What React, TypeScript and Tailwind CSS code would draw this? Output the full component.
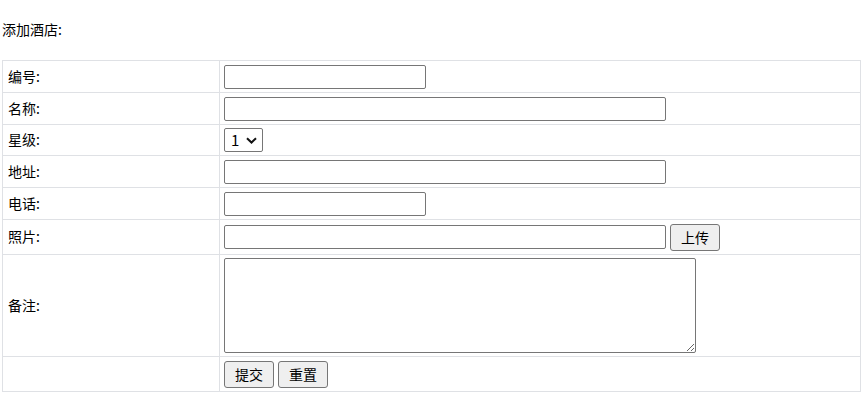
const rows = [
  { label: "编号:", h: "h-[32px]", kind: "short" },
  { label: "名称:", h: "h-[32px]", kind: "long" },
  { label: "星级:", h: "h-[31px]", kind: "select" },
  { label: "地址:", h: "h-[32px]", kind: "long" },
  { label: "电话:", h: "h-[32px]", kind: "short" },
  { label: "照片:", h: "h-[35px]", kind: "upload" },
  { label: "备注:", h: "h-[102px]", kind: "textarea" },
  { label: "", h: "h-[35px]", kind: "actions" },
];

const inputCls =
  "block h-[24px] border border-[#767676] rounded-[2px] bg-white px-[2px] text-[14px] outline-none";
const btnCls =
  "h-[27px] w-[50px] border border-[#767676] rounded-[3px] bg-[#efefef] text-[14px] text-black leading-none";

function Field({ kind }: { kind: string }) {
  if (kind === "short") return <input type="text" className={`${inputCls} w-[202px]`} />;
  if (kind === "long") return <input type="text" className={`${inputCls} w-[442px]`} />;
  if (kind === "select")
    return (
      <div className="relative w-[39px] h-[24px]">
        <select className="appearance-none w-[39px] h-[24px] border border-[#767676] rounded-[2px] bg-white pl-[6px] text-[15px] text-black outline-none">
          <option>1</option>
          <option>2</option>
          <option>3</option>
          <option>4</option>
          <option>5</option>
        </select>
        <svg
          className="pointer-events-none absolute left-[22px] top-[9px]"
          width="11"
          height="7"
          viewBox="0 0 11 7"
        >
          <path d="M1 1.2 L5.5 5.5 L10 1.2" fill="none" stroke="#111" strokeWidth="2" />
        </svg>
      </div>
    );
  if (kind === "upload")
    return (
      <div className="flex items-center gap-[4px]">
        <input type="text" className={`${inputCls} w-[442px]`} />
        <button className={btnCls}>上传</button>
      </div>
    );
  if (kind === "textarea")
    return (
      <textarea className="block w-[472px] h-[95px] border border-[#767676] rounded-[2px] bg-white p-[2px] text-[14px] outline-none" />
    );
  return (
    <div className="flex items-center gap-[4px]">
      <button className={btnCls}>提交</button>
      <button className={btnCls}>重置</button>
    </div>
  );
}

export default function App() {
  return (
    <div
      className="min-h-[419px] bg-white text-black text-[14px]"
      style={{ fontFamily: '"Noto Sans CJK SC", "Noto Sans", sans-serif' }}
    >
      <p className="pl-[2px] pt-[19px] pb-[21px] leading-[20px]">添加酒店:</p>
      <table className="ml-[2px] w-[859px] border-collapse">
        <tbody>
          {rows.map((r, i) => (
            <tr key={i} className={r.h}>
              <td className="w-[217px] border border-[#dfe1e5] pl-[5px] pb-[2px] align-middle leading-[20px]">
                {r.label}
              </td>
              <td className="border border-[#dfe1e5] pl-[4px] align-middle">
                <Field kind={r.kind} />
              </td>
            </tr>
          ))}
        </tbody>
      </table>
    </div>
  );
}
